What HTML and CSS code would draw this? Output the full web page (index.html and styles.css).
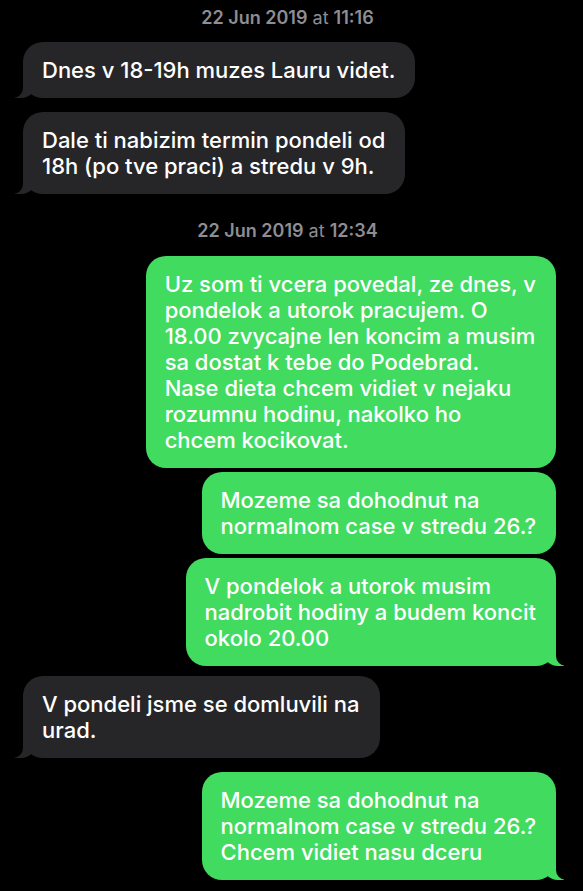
FILE: index.html
```html
<!DOCTYPE html>
<html lang="en">
<head>
    <meta charset="UTF-8">
    <meta name="viewport" content="width=device-width, initial-scale=1.0">
    <title>Messages</title>
    <link rel="stylesheet" href="styles.css">
</head>
<body>
    <div class="chat">
        <div class="stamp"><b>22 Jun 2019</b> at <b>11:16</b></div>

        <div class="msg in tail">Dnes v 18-19h muzes Lauru videt.</div>
        <div class="msg in tail">Dale ti nabizim termin pondeli od<br>18h (po tve praci) a stredu v 9h.</div>

        <div class="stamp second"><b>22 Jun 2019</b> at <b>12:34</b></div>

        <div class="msg out first">Uz som ti vcera povedal, ze dnes, v<br>pondelok a utorok pracujem. O<br>18.00 zvycajne len koncim a musim<br>sa dostat k tebe do Podebrad.<br>Nase dieta chcem vidiet v nejaku<br>rozumnu hodinu, nakolko ho<br>chcem kocikovat.</div>
        <div class="msg out close">Mozeme sa dohodnut na<br>normalnom case v stredu 26.?</div>
        <div class="msg out close tail">V pondelok a utorok musim<br>nadrobit hodiny a budem koncit<br>okolo 20.00</div>

        <div class="msg in tail reply">V pondeli jsme se domluvili na<br>urad.</div>

        <div class="msg out tail">Mozeme sa dohodnut na<br>normalnom case v stredu 26.?<br>Chcem vidiet nasu dceru</div>
    </div>
</body>
</html>
```

FILE: styles.css
```css
body {
    margin: 0;
    padding: 0;
    background-color: #000;
    font-family: Inter, "Noto Sans", sans-serif;
    color: #fff;
}

.chat {
    display: flex;
    flex-direction: column;
    padding: 8px 27px 0 23px;
}

.stamp {
    align-self: center;
    font-size: 18px;
    line-height: 20px;
    font-weight: 400;
    color: #8d8d92;
    margin-right: 4px;
}

.stamp b {
    font-weight: 600;
}

.stamp.second {
    margin-top: 27px;
}

.msg {
    position: relative;
    padding: 15px 20px 15px 19px;
    border-radius: 20px;
    font-size: 22px;
    line-height: 26px;
    font-weight: 500;
    margin-top: 14px;
}

.msg.in {
    align-self: flex-start;
    background-color: #262628;
}

.msg.in.reply {
    margin-top: 10px;
}

.msg.out {
    align-self: flex-end;
    background-color: #41db5f;
}

.msg.out.first {
    margin-top: 15px;
}

.msg.out.close {
    margin-top: 4px;
}

/* bubble tails */
.msg.tail::before,
.msg.tail::after {
    content: "";
    position: absolute;
    bottom: 0;
    height: 22px;
}

.msg.in.tail::before {
    left: -8px;
    width: 22px;
    background-color: #262628;
    border-bottom-right-radius: 16px;
}

.msg.in.tail::after {
    left: -12px;
    width: 12px;
    background-color: #000;
    border-bottom-right-radius: 10px;
}

.msg.out.tail::before {
    right: -8px;
    width: 22px;
    background-color: #41db5f;
    border-bottom-left-radius: 16px;
}

.msg.out.tail::after {
    right: -12px;
    width: 12px;
    background-color: #000;
    border-bottom-left-radius: 10px;
}
```
